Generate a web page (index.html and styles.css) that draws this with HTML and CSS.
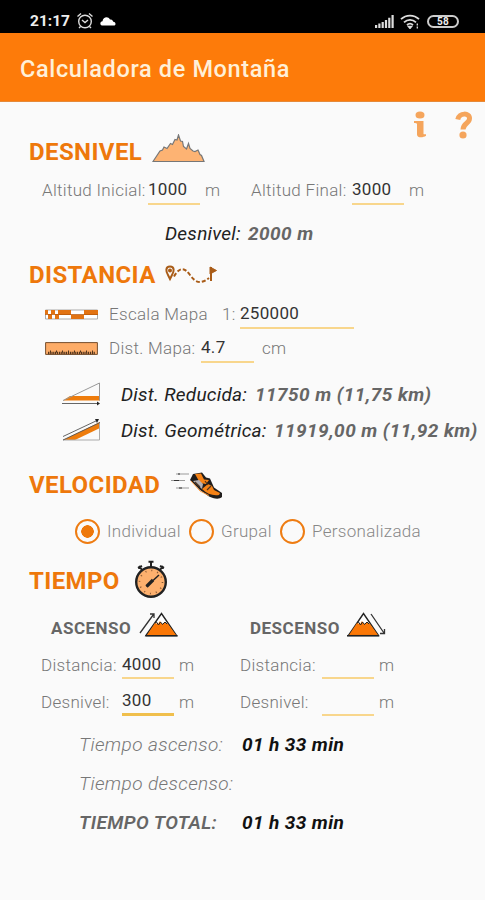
FILE: index.html
```
<!DOCTYPE html>
<html lang="es">

<head>
    <meta charset="UTF-8">
    <meta name="viewport" content="width=device-width, initial-scale=1.0">
    <title>Calculadora de Montaña</title>
    <link rel="stylesheet" href="styles.css">
</head>

<body>

    <!-- Status bar -->
    <div class="status-bar">
        <span class="clock">21:17</span>
        <svg class="alarm-icon" width="18" height="18" viewBox="0 0 18 18" fill="none" stroke="#ddd" stroke-width="1.4">
            <circle cx="9" cy="9.5" r="6.3"/>
            <path d="M1.5 4.5 5 1.5M16.500 4.500 13 1.500M6 8l3 2.500 3-2.500M4.500 14.500l-1.500 1.500M13.500 14.500l1.500 1.500"/>
        </svg>
        <svg class="cloud-icon" width="16" height="10" viewBox="0 0 16 10" fill="#fff">
            <path d="M2 9.500C-.5 9 0 5.500 2.500 5.200 3 1 8 -.5 10 3.500c2.500-.3 3 1.500 3.300 2.300 3 .4 2.700 3.700.7 3.700z"/>
        </svg>
        <svg class="signal-icon" width="19" height="13" viewBox="0 0 19 13" fill="#ddd">
            <path d="M0 10h2.200v3H0zM3.300 8.500h2.200V13H3.300zM6.600 7h2.200v6H6.600zM9.900 5h2.200v8H9.900zM13.200 2.700h2.200V13h-2.200zM16.500 0h2.200v13h-2.200z"/>
        </svg>
        <svg class="wifi-icon" width="20" height="15" viewBox="0 0 20 15" fill="none" stroke="#ddd" stroke-width="1.800">
            <path d="M1 5.200C6 .3 14 .3 19 5.200M4 8.300c3.500-3.300 8.500-3.300 12 0M7 11c2-1.800 4-1.800 6 0"/>
            <path d="M8.300 12.500h3.400L10 14.500zM17.300 9.500v2M17.300 12.500v2" fill="#ddd" stroke-width="1.300"/>
        </svg>
        <span class="battery">58</span>
    </div>

    <h1 class="app-bar">Calculadora de Montaña</h1>

    <div class="help-row">
        <svg width="14" height="27" viewBox="0 0 14 27" fill="#f5a55c">
            <ellipse cx="7" cy="4" rx="4.500" ry="3.600"/>
            <path d="M1 10h9.500v12.500c0 1 1 1 2.500.7v1.600c-3 2.200-9 2.200-9-1.300V13C4 12 2.500 12 1 12z"/>
        </svg>
        <svg width="18" height="28" viewBox="0 0 18 28" fill="none" stroke="#f5a55c" stroke-width="5">
            <path d="M2.800 8.500C4 1.500 15 1.500 14.500 7.500c0 5-6.300 4.500-6.500 11"/>
            <circle cx="8" cy="24" r="3.600" fill="#f5a55c" stroke="none"/>
        </svg>
    </div>

    <!-- Desnivel -->
    <div class="section-title">
        <h2 class="title-desnivel">DESNIVEL</h2>
        <svg class="ridge-icon" width="53" height="29" viewBox="0 0 53 29" fill="#fdb373" stroke="#777" stroke-width="1.200">
            <path d="M1 27.500 8 17l2.500-1 1.500-3 3 1.500 3.500-5 2 1L23 5.500l2 .5L26.500 1l2 6 2 .5 1 5 3 2.500 2-5.500 1.500 5 3 2.500 2 .5 3-1.500 2 4.500 1.500 1 2.500 6z"/>
        </svg>
    </div>
    <div class="row altitude-row">
        <label for="alt-ini">Altitud Inicial:</label>
        <input type="text" id="alt-ini" value="1000">
        <span class="unit">m</span>
        <label for="alt-fin">Altitud Final:</label>
        <input type="text" id="alt-fin" value="3000">
        <span class="unit">m</span>
    </div>
    <div class="row result climb-result">
        <span class="name">Desnivel:</span>
        <b>2000 m</b>
    </div>

    <!-- Distancia -->
    <div class="section-title title-short">
        <h2 class="title-distancia">DISTANCIA</h2>
        <svg class="route-icon" width="54" height="20" viewBox="0 0 54 20" fill="none" stroke="#a95c18" stroke-width="2">
            <path d="M5 1.500c-5 0-4 5.500-2 8.500L5 14l2-4c2-3 3-8.500-2-8.500z"/>
            <circle cx="5" cy="5.500" r="1"/>
            <path d="M9 11.500C15 1 20 3 25 10s10 10 19 3" stroke-dasharray="4 2"/>
            <path d="M46 2v14"/>
            <path d="M45 2l6.500 3.500L45 9z" fill="#a95c18" stroke-width="1"/>
        </svg>
    </div>
    <div class="row scale-row">
        <svg width="53" height="11" viewBox="0 0 53 11">
            <path d="M.5 1h52v9H.500z" fill="#fff" stroke="#aaa"/>
            <path d="M0 1h3v4H0zM6 1h4v4H6zM13 1h13v5H13zM39 1h14v5H39zM3 5h4v5H3zM10 5h4v5h-4zM26 6h13v4H26z" fill="#e27312"/>
            <path d="M0 5.500h53" stroke="#b9590b" stroke-width=".8"/>
        </svg>
        <label for="escala">Escala Mapa</label>
        <span class="ratio">1:</span>
        <input type="text" id="escala" value="250000">
    </div>
    <div class="row map-row">
        <svg width="53" height="13" viewBox="0 0 53 13">
            <path d="M.6.600h51.800v11.800H.600z" fill="#fdac67" stroke="#75502f"/>
            <path d="M3 11h47" stroke="#51331b" stroke-width="2.500" stroke-dasharray="1.400 .8"/>
            <path d="M5 9.500h44" stroke="#51331b" stroke-width="2" stroke-dasharray="1 5"/>
        </svg>
        <label for="mapa">Dist. Mapa:</label>
        <input type="text" id="mapa" value="4.7">
        <span class="unit">cm</span>
    </div>
    <div class="row result reduced-row">
        <svg width="39" height="24" viewBox="0 0 39 24">
            <path d="M1 18.500 8 14h30v4.500z" fill="#ee7c0c"/>
            <path d="M1 18.500 37.500 1v17.500" fill="none" stroke="#999"/>
            <path d="M0 21.500h37" stroke="#666"/>
            <path d="M35 19.500l3 2-3 2z" fill="#222"/>
        </svg>
        <span class="name">Dist. Reducida:</span>
        <b>11750 m (11,75 km)</b>
    </div>
    <div class="row result geometric-row">
        <svg width="39" height="24" viewBox="0 0 39 24">
            <path d="M1 22 38 4v6L13 22z" fill="#ee7c0c"/>
            <path d="M1 22h36.500V5" fill="none" stroke="#aaa"/>
            <path d="M1 18.500 36 2M1 22 38 4.500" stroke="#555" stroke-width=".9"/>
            <path d="M33 1h4l-2 4z" fill="#222"/>
        </svg>
        <span class="name">Dist. Geométrica:</span>
        <b>11919,00 m (11,92 km)</b>
    </div>

    <!-- Velocidad -->
    <div class="section-title title-speed">
        <h2 class="title-velocidad">VELOCIDAD</h2>
        <svg class="shoe-icon" width="53" height="28" viewBox="0 0 53 28">
            <path d="M6 3h13M1 9.500h14M6 17h13" stroke="#999" stroke-width="1.200"/>
            <path d="M4 9.500h5M8 3h2M9 17h3" stroke="#333" stroke-width="1.200"/>
            <path d="M20 9l3-6 9-1.500 4 5 4 1 4 9 8 5.500v4c-3 3-9 1.500-13-.5L30 19z" fill="#201d1c"/>
            <path d="M25 3l6-.5 3 6 5 .5-3 4-6-1zM32 18l6-5 4 2 2 4 6 3-1 2c-6 1-12-1-17-6z" fill="#f58216"/>
            <path d="M23 10l6-1 4 4-1 5z" fill="#b5b1b5"/>
            <path d="M35 10l3 4M25 11l5 5M37 19l4-4" stroke="#4c3421" stroke-width="1.200"/>
            <path d="M21 10l9 10 9 4.500" fill="none" stroke="#ff9533" stroke-width=".9"/>
        </svg>
    </div>
    <div class="row radio-row">
        <input type="radio" name="velocidad" id="individual" checked>
        <label for="individual">Individual</label>
        <input type="radio" name="velocidad" id="grupal">
        <label for="grupal">Grupal</label>
        <input type="radio" name="velocidad" id="personalizada">
        <label for="personalizada">Personalizada</label>
    </div>

    <!-- Tiempo -->
    <div class="section-title title-time">
        <h2 class="title-tiempo">TIEMPO</h2>
        <svg class="watch-icon" width="34" height="39" viewBox="0 0 34 39">
            <path d="M17 1v6M14.500 1.800h5M4 8l4-2M5 6l3 4M30 8l-4-2M29 6l-3 4" stroke="#222" stroke-width="2"/>
            <circle cx="17" cy="22" r="14.800" fill="#fdb06e" stroke="#222" stroke-width="2.400"/>
            <circle cx="17" cy="22" r="11.500" fill="none" stroke="#865732" stroke-width="1.600" stroke-dasharray="1 5.020"/>
            <path d="M12.500 26.500 25 15" stroke="#222" stroke-width="1.500"/>
            <path d="M12.500 26.500 19 20" stroke="#222" stroke-width="3.200"/>
        </svg>
    </div>
    <div class="row mode-row">
        <h3>ASCENSO</h3>
        <svg width="39" height="25" viewBox="0 0 39 25">
            <path d="M7 23.500 22.500 1.500 37.500 23.500z" fill="#fff" stroke="#222" stroke-width="1.400"/>
            <path d="M8 23 16 11l3 1 2-3 2 3 3-2 3 2 8 11z" fill="#fa7706"/>
            <path d="M16 11l1.500-1 2 3 2-3 2 2.500 2.500-2.500 2 2" fill="none" stroke="#222"/>
            <path d="M6.500 23.700h32" stroke="#222" stroke-width="1.500"/>
            <path d="M1 21 14.500 2.500M11 2h4v4" fill="none" stroke="#333" stroke-width="1.300"/>
        </svg>
        <h3>DESCENSO</h3>
        <svg width="39" height="25" viewBox="0 0 39 25">
            <path d="M1.500 23.500 16.500 1.500 31.500 23.500z" fill="#fff" stroke="#222" stroke-width="1.400"/>
            <path d="M2 23 10 11l3 1 2-3 2 3 3-2 3 2 8 11z" fill="#fa7706"/>
            <path d="M10 11l1.500-1 2 3 2-3 2 2.500 2.500-2.500 2 2" fill="none" stroke="#222"/>
            <path d="M0 23.700h32" stroke="#222" stroke-width="1.500"/>
            <path d="M24 2 37 21M37.500 17v4.500H33" fill="none" stroke="#333" stroke-width="1.300"/>
        </svg>
    </div>
    <div class="row time-row">
        <label for="dist-asc">Distancia:</label>
        <input type="text" id="dist-asc" value="4000">
        <span class="unit">m</span>
        <label for="dist-desc">Distancia:</label>
        <input type="text" id="dist-desc">
        <span class="unit">m</span>
    </div>
    <div class="row time-row">
        <label for="desn-asc">Desnivel:</label>
        <input type="text" id="desn-asc" class="focused" value="300">
        <span class="unit">m</span>
        <label for="desn-desc">Desnivel:</label>
        <input type="text" id="desn-desc">
        <span class="unit">m</span>
    </div>

    <!-- Totals -->
    <div class="totals">
        <span>Tiempo ascenso:</span>
        <b>01 h 33 min</b>
        <span>Tiempo descenso:</span>
        <b></b>
        <span class="total-all">TIEMPO TOTAL:</span>
        <b>01 h 33 min</b>
    </div>

</body>

</html>
```

FILE: styles.css
```
* {
    box-sizing: border-box;
}

body {
    margin: 0;
    width: 485px;
    height: 900px;
    overflow: hidden;
    background: #fafafa;
    color: #777;
    font-family: Roboto, sans-serif;
    font-size: 17px;
    font-weight: 300;
    letter-spacing: 0.3px;
    white-space: nowrap;
}

h1,
h2,
h3 {
    margin: 0;
}

svg {
    display: block;
    flex: none;
}

/* Status bar */
.status-bar {
    display: flex;
    align-items: center;
    height: 33px;
    padding: 9px 26px 0 30px;
    background: #000;
    color: #eee;
}

.clock {
    width: 46px;
    font-size: 15.5px;
    font-weight: 700;
    letter-spacing: 0;
}

.cloud-icon {
    margin-left: 6px;
}

.signal-icon {
    margin-left: auto;
}

.wifi-icon {
    margin: 0 7px 0 6px;
}

.battery {
    width: 32px;
    height: 13px;
    border: 2px solid #ccc;
    border-radius: 7px;
    font-size: 10px;
    font-weight: 700;
    line-height: 9px;
    text-align: center;
}

.app-bar {
    height: 69px;
    padding-left: 20px;
    border-bottom: 1px solid #e58a3a;
    background: #fd7b0a;
    color: #fff0d8;
    font-size: 23.5px;
    font-weight: 500;
    line-height: 73px;
    letter-spacing: 0.65px;
}

.help-row {
    display: flex;
    justify-content: flex-end;
    gap: 28px;
    height: 30px;
    padding: 9px 12px 0 0;
}

/* Section headings */
.section-title {
    display: flex;
    align-items: center;
    height: 40px;
    padding-left: 29px;
}

.section-title h2 {
    flex: none;
    color: #ee780b;
    font-size: 24px;
    font-weight: 700;
    letter-spacing: 0.4px;
}

.title-short {
    height: 34px;
}

.title-speed {
    margin-top: 17px;
}

.title-time {
    margin-top: 12px;
}

.section-title .title-desnivel {
    width: 123px;
}

.section-title .title-distancia {
    width: 136px;
}

.section-title .title-velocidad {
    width: 141px;
}

.section-title .title-tiempo {
    width: 105px;
}

.ridge-icon {
    margin-bottom: 7px;
}

.watch-icon {
    margin-bottom: 4px;
}

/* Form rows */
.row {
    display: grid;
    align-items: center;
    height: 36px;
}

input[type="text"] {
    width: 100%;
    height: 29px;
    padding: 0;
    border: none;
    border-bottom: 2px solid #f8d68c;
    background: none;
    color: #333;
    font: inherit;
    font-weight: 400;
    letter-spacing: 0.3px;
}

input[type="text"].focused {
    border-bottom: 3px solid #f0bf4c;
}

.altitude-row {
    grid-template-columns: 106px 52px 51px 101px 52px 30px;
    padding-left: 42px;
}

.altitude-row .unit,
.time-row .unit {
    padding-left: 5px;
}

.climb-result {
    grid-template-columns: 83px auto;
    height: 50px;
    padding-left: 165px;
}

.scale-row {
    grid-template-columns: 64px 113px 18px 114px;
    height: 34px;
    margin-top: 5px;
    padding-left: 45px;
}

.map-row {
    grid-template-columns: 64px 92px 53px 40px;
    height: 34px;
    padding-left: 45px;
}

.map-row .unit {
    padding-left: 8px;
}

.result {
    color: #666;
    font-size: 19px;
    font-style: italic;
    letter-spacing: 0.45px;
}

.result .name {
    color: #222;
    font-weight: 400;
    letter-spacing: 0.25px;
}

.result b {
    font-weight: 700;
}

.reduced-row {
    grid-template-columns: 59px 134px auto;
    margin-top: 11px;
    padding-left: 62px;
}

.geometric-row {
    grid-template-columns: 59px 153px auto;
    padding-left: 62px;
}

.radio-row {
    grid-template-columns: 32px 82px 32px 59px 32px auto;
    margin-top: 8px;
    padding-left: 75px;
    color: #888;
}

input[type="radio"] {
    appearance: none;
    width: 25px;
    height: 25px;
    margin: 0;
    border: 2.5px solid #ee7c12;
    border-radius: 50%;
}

input[type="radio"]:checked {
    background: radial-gradient(circle, #ee780b 6px, transparent 6.5px);
}

.mode-row {
    grid-template-columns: 88px 111px 97px auto;
    margin-top: 9px;
    padding-left: 51px;
}

.mode-row h3 {
    color: #666;
    font-size: 17px;
    font-weight: 700;
    letter-spacing: 0.5px;
}

.mode-row svg {
    margin-bottom: 7px;
}

.time-row {
    grid-template-columns: 81px 52px 66px 82px 52px 30px;
    height: 37px;
    padding-left: 41px;
}

/* Totals */
.totals {
    display: grid;
    grid-template-columns: 163px auto;
    grid-auto-rows: 39px;
    align-items: center;
    margin-top: 5px;
    padding-left: 79px;
    font-size: 19px;
    font-style: italic;
    letter-spacing: 0.4px;
}

.totals b {
    color: #111;
    font-weight: 700;
}

.totals .total-all {
    color: #666;
    font-weight: 600;
}
```
